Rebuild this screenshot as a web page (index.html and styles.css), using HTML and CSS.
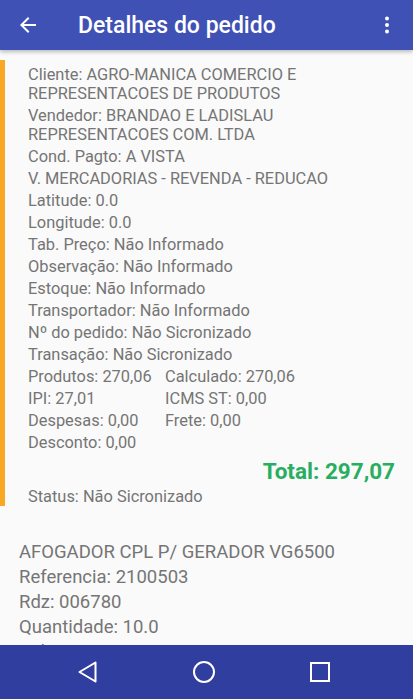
FILE: index.html
```html
<!DOCTYPE html>
<html lang="pt">
<head>
    <meta charset="UTF-8">
    <meta name="viewport" content="width=device-width, initial-scale=1.0">
    <title>Detalhes do pedido</title>
    <link rel="stylesheet" href="styles.css">
</head>
<body>

    <header class="appbar">
        <svg class="back" width="24" height="24" viewBox="0 0 24 24">
            <path d="M20 11H7.83l5.59-5.59L12 4l-8 8 8 8 1.41-1.41L7.83 13H20v-2z" fill="#fff"/>
        </svg>
        <h1>Detalhes do pedido</h1>
        <svg class="menu" width="24" height="24" viewBox="0 0 24 24">
            <circle cx="12" cy="5.5" r="2" fill="#fff"/>
            <circle cx="12" cy="12" r="2" fill="#fff"/>
            <circle cx="12" cy="18.5" r="2" fill="#fff"/>
        </svg>
    </header>

    <main class="content">
        <!-- Cabecalho do pedido -->
        <section class="order">
            <p>Cliente: AGRO-MANICA COMERCIO E REPRESENTACOES DE PRODUTOS</p>
            <p>Vendedor: BRANDAO E LADISLAU REPRESENTACOES COM. LTDA</p>
            <p>Cond. Pagto: A VISTA</p>
            <p>V. MERCADORIAS - REVENDA - REDUCAO</p>
            <p>Latitude: 0.0</p>
            <p>Longitude: 0.0</p>
            <p>Tab. Preço: Não Informado</p>
            <p>Observação: Não Informado</p>
            <p>Estoque: Não Informado</p>
            <p>Transportador: Não Informado</p>
            <p>Nº do pedido: Não Sicronizado</p>
            <p>Transação: Não Sicronizado</p>
            <div class="values">
                <p>Produtos: 270,06</p>
                <p>Calculado: 270,06</p>
                <p>IPI: 27,01</p>
                <p>ICMS ST: 0,00</p>
                <p>Despesas: 0,00</p>
                <p>Frete: 0,00</p>
                <p>Desconto: 0,00</p>
            </div>
            <div class="total">Total: 297,07</div>
            <p>Status: Não Sicronizado</p>
        </section>

        <!-- Itens -->
        <section class="item">
            <p>AFOGADOR CPL P/ GERADOR VG6500</p>
            <p>Referencia: 2100503</p>
            <p>Rdz: 006780</p>
            <p>Quantidade: 10.0</p>
            <p>Valor: 27,01</p>
        </section>
    </main>

    <nav class="navbar">
        <svg width="24" height="24" viewBox="0 0 24 24">
            <path d="M19.5 2.5 L3.5 12 L19.5 21.5 Z" fill="none" stroke="#fff" stroke-width="2" stroke-linejoin="round"/>
        </svg>
        <svg width="24" height="24" viewBox="0 0 24 24">
            <circle cx="12" cy="12" r="10" fill="none" stroke="#fff" stroke-width="2"/>
        </svg>
        <svg width="24" height="24" viewBox="0 0 24 24">
            <rect x="3" y="3" width="18" height="18" fill="none" stroke="#fff" stroke-width="2"/>
        </svg>
    </nav>

</body>
</html>
```

FILE: styles.css
```css
body {
    margin: 0;
    padding: 0;
    font-family: Roboto, 'Noto Sans', sans-serif;
    background: #fafafa;
    height: 699px;
    overflow: hidden;
    display: flex;
    flex-direction: column;
}

.appbar {
    height: 50px;
    flex-shrink: 0;
    background: #3f51b5;
    display: flex;
    align-items: center;
    padding: 0 14px 0 16px;
    box-shadow: 0 2px 4px rgba(0, 0, 0, 0.25);
    position: relative;
    z-index: 1;
}

.appbar h1 {
    flex: 1;
    margin: 0 0 0 38px;
    color: #fff;
    font-size: 23px;
    font-weight: 500;
}

.content {
    flex: 1;
    overflow: hidden;
    padding-top: 10px;
}

.content p {
    margin: 0;
    color: #757575;
}

.order {
    border-left: 5px solid #f9a825;
    padding: 5px 14px 0 23px;
    font-size: 16.4px;
    line-height: 19px;
}

.order p {
    margin-bottom: 3px;
}

.values {
    display: grid;
    grid-template-columns: 137px 1fr;
}

.total {
    text-align: right;
    color: #27ae60;
    font-size: 22.5px;
    font-weight: bold;
    line-height: 26px;
    margin: 3px 4px 3px 0;
}

.item {
    padding: 31px 19px 0;
    font-size: 18.5px;
    line-height: 25px;
}

.navbar {
    height: 54px;
    flex-shrink: 0;
    background: #303f9f;
    display: flex;
    justify-content: center;
    align-items: center;
    gap: 92px;
    padding-right: 5px;
}
```
